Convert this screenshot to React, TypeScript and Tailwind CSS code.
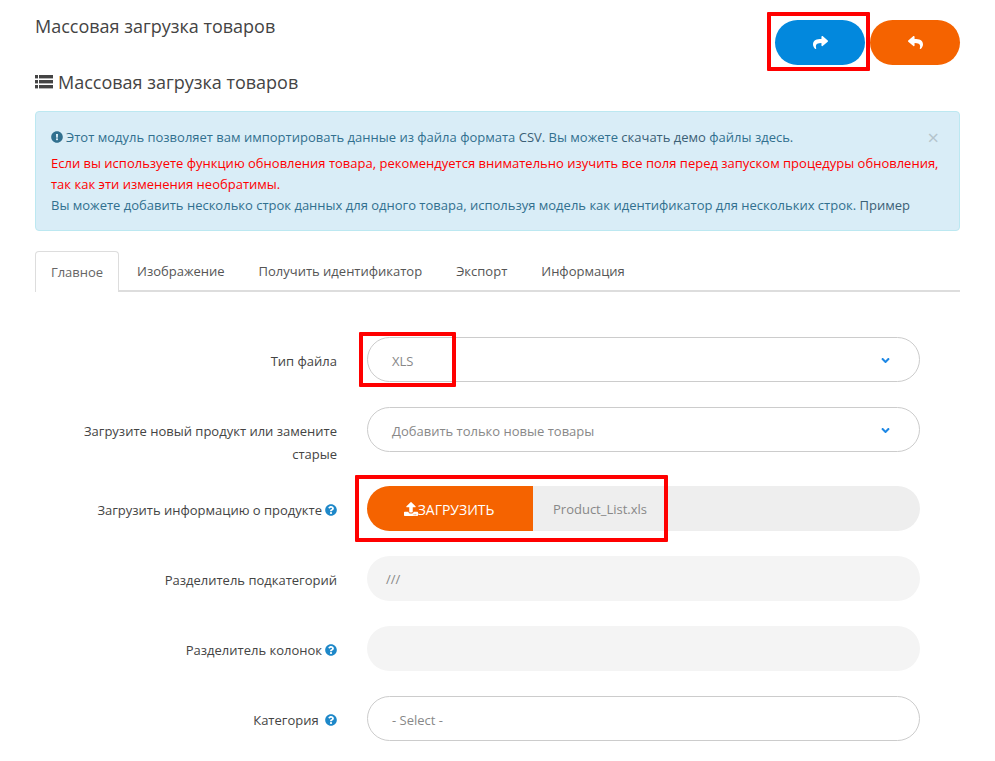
import { FaAngleDown, FaExclamationCircle, FaQuestionCircle, FaReply, FaShare, FaUpload } from 'react-icons/fa';

function Help() {
  return <FaQuestionCircle className="inline-block text-[#1e88c9] ml-[3px] align-[-1px]" size={12} />;
}

function Row({ label, tall, children }: { label: React.ReactNode; tall?: boolean; children: React.ReactNode }) {
  return (
    <div className={`flex ${tall ? 'h-[54px]' : 'h-[45px]'}`}>
      <div className="w-[272px] ml-[30px] mr-[30px] text-right text-[13px] leading-[23px] text-[#444] pt-[13px]">{label}</div>
      <div className="w-[553px]">{children}</div>
    </div>
  );
}

function SelectBox({ value }: { value: string }) {
  return (
    <div className="h-[45px] rounded-[23px] border border-[#ccc] bg-white flex items-center pl-[24px] pr-[27px] text-[13px] text-[#888]">
      <span className="flex-1 pt-[5px]">{value}</span>
      <FaAngleDown className="text-[#1e88e5] mt-[1px]" size={13} />
    </div>
  );
}

export default function App() {
  return (
    <div className="relative w-[995px] h-[761px] overflow-hidden bg-white px-[35px] font-['Open_Sans',sans-serif]">
      {/* Header */}
      <div className="flex justify-between pt-[20px] h-[65px]">
        <h1 className="text-[18px] leading-[12px] text-[#444]">Массовая загрузка товаров</h1>
        <div className="flex gap-[5px]">
          <button className="w-[90px] h-[45px] rounded-[23px] bg-[#0288dd] text-white flex items-center justify-center">
            <FaShare size={15} />
          </button>
          <button className="w-[90px] h-[45px] rounded-[23px] bg-[#f56300] text-white flex items-center justify-center">
            <FaReply size={15} className="ml-[1px]" />
          </button>
        </div>
      </div>

      <h3 className="flex items-center gap-[5px] text-[18px] leading-[34px] text-[#444]">
        <svg width="18" height="14" viewBox="0 0 18 14" fill="currentColor" aria-hidden="true">
          <rect x="0" y="0" width="3" height="3.4" />
          <rect x="4" y="0" width="14" height="3.4" />
          <rect x="0" y="5" width="3" height="3.4" />
          <rect x="4" y="5" width="14" height="3.4" />
          <rect x="0" y="10" width="3" height="3.4" />
          <rect x="4" y="10" width="14" height="3.4" />
        </svg>
        Массовая загрузка товаров
      </h3>

      {/* Alert */}
      <div className="relative mt-[12px] h-[120px] rounded-[4px] border border-[#bce8f1] bg-[#d9edf7] px-[15px] pt-[15px] text-[13px] leading-[21px] text-[#31708f]">
        <div className="h-[26px]">
          <FaExclamationCircle className="inline-block mr-[3px] align-[-1px]" size={12} />
          Этот модуль позволяет вам импортировать данные из файла формата <span className="text-[#3b6075]">CSV</span>. Вы можете <span className="text-[#3b6075]">скачать демо</span> файлы здесь.
        </div>
        <div className="text-[#ff0000]">
          Если вы используете функцию обновления товара, рекомендуется внимательно изучить все поля перед запуском процедуры обновления, так как эти изменения необратимы.
        </div>
        <div>
          Вы можете добавить несколько строк данных для одного товара, используя модель как идентификатор для нескольких строк. <span className="text-[#3b6075]">Пример</span>
        </div>
        <span className="absolute right-[20px] top-[14px] text-[#b4c4cc] text-[20px] leading-[24px]">×</span>
      </div>

      {/* Tabs */}
      <div className="mt-[20px] flex h-[41px] border-b-2 border-[#ddd] text-[13px] text-[#555]">
        <div className="h-[41px] w-[84px] mr-[1px] pt-[2px] flex items-center justify-center border border-b-0 border-[#ddd] rounded-t-[4px] bg-white text-[#666]">Главное</div>
        <div className="px-[17px] pt-[2px] flex items-center">Изображение</div>
        <div className="px-[17px] pt-[2px] flex items-center">Получить идентификатор</div>
        <div className="px-[17px] pt-[2px] flex items-center">Экспорт</div>
        <div className="px-[17px] pt-[2px] flex items-center">Информация</div>
      </div>

      {/* Form */}
      <div className="mt-[45px] flex flex-col gap-[25px]">
        <Row label="Тип файла">
          <SelectBox value="XLS" />
        </Row>
        <Row tall label="Загрузите новый продукт или замените старые">
          <SelectBox value="Добавить только новые товары" />
        </Row>
        <Row label={<>Загрузить информацию о продукте<Help /></>}>
          <div className="h-[45px] rounded-[23px] bg-[#eee] flex items-center overflow-hidden text-[13px]">
            <div className="w-[166px] h-full pr-[2px] bg-[#f56300] text-white flex items-center justify-center text-[14px]">
              <FaUpload size={14} className="mt-[1px]" />
              <span className="pt-[2px]">ЗАГРУЗИТЬ</span>
            </div>
            <span className="pl-[20px] pt-[2px] text-[#888]">Product_List.xls</span>
          </div>
        </Row>
        <Row label="Разделитель подкатегорий">
          <div className="h-[45px] rounded-[23px] bg-[#f4f4f4] flex items-center pt-[2px] pl-[19px] text-[13px] text-[#888]">///</div>
        </Row>
        <Row label={<>Разделитель колонок<Help /></>}>
          <div className="h-[45px] rounded-[23px] bg-[#f4f4f4]" />
        </Row>
        <Row label={<>Категория <Help /></>}>
          <div className="h-[45px] rounded-[23px] border border-[#ccc] bg-white flex items-center pl-[24px] text-[13px] text-[#888]">
            <span className="pt-[5px]">- Select -</span>
          </div>
        </Row>
      </div>

      {/* Red annotation frames */}
      <div className="absolute left-[767px] top-[12px] w-[103px] h-[59px] border-[4px] border-[#ff0000] rounded-[1px]" />
      <div className="absolute left-[359px] top-[332px] w-[97px] h-[55px] border-[4px] border-[#ff0000] rounded-[1px]" />
      <div className="absolute left-[355px] top-[475px] w-[313px] h-[67px] border-[4px] border-[#ff0000] rounded-[1px]" />
    </div>
  );
}
